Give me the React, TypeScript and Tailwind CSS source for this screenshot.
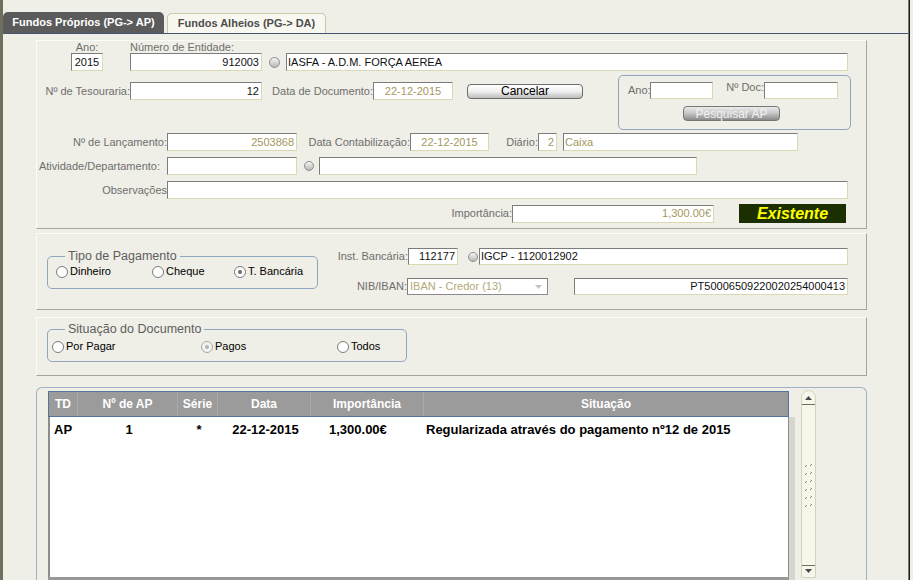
import type { ReactNode } from 'react'

type BoxProps = { className: string; value?: string; align?: 'left' | 'right' | 'center'; tan?: boolean }

function Box({ className, value = '', align = 'left', tan = false }: BoxProps) {
  const alignCls =
    align === 'right' ? 'justify-end pr-[2px]' : align === 'center' ? 'justify-center' : 'justify-start pl-[1px]'
  return (
    <div
      className={`${className} shrink-0 flex items-center bg-white border border-t-[#7c7c7c] border-l-[#7c7c7c] border-r-[#d9d9b2] border-b-[#d9d9b2] text-[11px] leading-none whitespace-nowrap overflow-hidden ${alignCls} ${tan ? 'text-[#a4975f]' : 'text-[#111]'}`}
    >
      {value}
    </div>
  )
}

function Lbl({ className, children }: { className: string; children: ReactNode }) {
  return (
    <div className={`${className} shrink-0 text-right text-[11px] leading-[13px] text-[#6e6e6e] whitespace-nowrap`}>
      {children}
    </div>
  )
}

// little grey round "lookup" button next to the code fields
function Lookup({ className }: { className: string }) {
  return (
    <div
      className={`${className} shrink-0 rounded-full border border-[#8c8c8c] bg-linear-to-b from-[#f6f6f6] to-[#b8b8b8]`}
    />
  )
}

function Radio({ label, checked = false, dim = false, className }: { label: string; checked?: boolean; dim?: boolean; className: string }) {
  return (
    <div className={`${className} shrink-0 flex items-center h-[13px]`}>
      <div
        className={`w-[12px] h-[12px] rounded-full border flex items-center justify-center ${dim ? 'border-[#a8a8a8] bg-[#f3f3f0]' : 'border-[#7a7a7a] bg-white'}`}
      >
        {checked && <div className={`w-[4px] h-[4px] rounded-full ${dim ? 'bg-[#b4b4b4]' : 'bg-[#6a6a6a]'}`} />}
      </div>
      <span className="ml-[2px] text-[11px] leading-none text-black">{label}</span>
    </div>
  )
}

const cols = [
  { t: 'TD', w: 'w-[29px]', v: 'AP', a: 'justify-start pl-[4px]' },
  { t: 'Nº de AP', w: 'w-[100px]', v: '1', a: 'justify-center' },
  { t: 'Série', w: 'w-[40px]', v: '*', a: 'justify-center' },
  { t: 'Data', w: 'w-[93px]', v: '22-12-2015', a: 'justify-center' },
  { t: 'Importância', w: 'w-[113px]', v: '1,300.00€', a: 'justify-start pl-[17px]' },
  { t: 'Situação', w: 'w-[364px]', v: 'Regularizada através do pagamento nº12 de 2015', a: 'justify-start pl-[1px]' },
]

function Scrollbar() {
  return (
    <div className="ml-[6px] mt-[2px] w-[15px] h-[188px] shrink-0 flex flex-col rounded-t-[8px] border border-[#d3d3ba] bg-[#f6f6ea]">
      <div className="h-[14px] shrink-0 flex items-end justify-center pb-[4px] border-b border-[#6f6f5a]">
        <svg width="7" height="4" viewBox="0 0 7 4">
          <path d="M0 4 L3.5 0 L7 4 Z" fill="#4a4a4a" />
        </svg>
      </div>
      <div className="flex-1 flex items-center justify-center">
        <svg width="9" height="44" viewBox="0 0 9 44">
          {[0, 1, 2, 3, 4, 5].map(i => (
            <g key={i} stroke="#8b8b5c" strokeWidth="1">
              <path d={`M1 ${i * 8 + 4} L3 ${i * 8 + 2}`} />
              <path d={`M6 ${i * 8 + 3} L8 ${i * 8 + 1}`} />
            </g>
          ))}
        </svg>
      </div>
      <div className="h-[12px] shrink-0 flex items-start justify-center pt-[3px] border-t border-[#6f6f5a]">
        <svg width="7" height="4" viewBox="0 0 7 4">
          <path d="M0 0 L3.5 4 L7 0 Z" fill="#4a4a4a" />
        </svg>
      </div>
    </div>
  )
}

export default function App() {
  return (
    <div className="w-[913px] h-[580px] overflow-hidden flex bg-[#efeee7] font-['Liberation_Sans',Arial,sans-serif]">
      <div className="w-[3px] shrink-0 bg-[#6f6f5e]" />

      <div className="w-[905px] shrink-0 flex flex-col">
        {/* tabs */}
        <div className="h-[33px] shrink-0 flex items-end">
          <div className="w-[161px] h-[21px] rounded-t-[5px] bg-[#5b5b5b] flex items-center justify-center text-[11px] font-bold text-white">
            Fundos Próprios (PG-&gt; AP)
          </div>
          <div className="ml-[3px] w-[159px] h-[20px] rounded-t-[5px] border border-b-0 border-[#c9c9a5] bg-[#f8f8f1] flex items-center justify-center text-[11px] font-bold text-[#4d4d4d]">
            Fundos Alheios (PG-&gt; DA)
          </div>
        </div>

        {/* frame */}
        <div className="flex-1 flex flex-col border-t border-[#3f5573]">
          {/* document panel */}
          <div className="mt-[6px] ml-[33px] w-[831px] shrink-0 border border-t-[#fbfbf7] border-l-[#fbfbf7] border-r-[#a5a5a0] border-b-[#a5a5a0] pb-[5px]">
            <div className="h-[12px] flex items-center text-[11px] text-[#6e6e6e]">
              <div className="ml-[34px] w-[32px] text-center">Ano:</div>
              <div className="ml-[27px]">Número de Entidade:</div>
            </div>
            <div className="h-[18px] flex items-center">
              <Box className="ml-[34px] w-[32px] h-[18px]" value="2015" align="center" />
              <Box className="ml-[27px] w-[132px] h-[18px]" value="912003" align="right" />
              <Lookup className="ml-[7px] w-[11px] h-[11px]" />
              <Box className="ml-[6px] w-[562px] h-[18px]" value="IASFA - A.D.M. FORÇA AEREA" />
            </div>

            <div className="mt-[4px] flex items-start">
              <div className="mt-[7px] h-[18px] flex items-center">
                <Lbl className="w-[93px]">Nº de Tesouraria:</Lbl>
                <Box className="w-[132px] h-[18px]" value="12" align="right" />
                <Lbl className="w-[111px]">Data de Documento:</Lbl>
                <Box className="w-[80px] h-[18px]" value="22-12-2015" align="center" tan />
                <button className="ml-[14px] w-[116px] h-[15px] rounded-[4px] border border-[#6c6c6c] bg-linear-to-b from-[#ffffff] via-[#efefef] to-[#bdbdbd] text-[12px] leading-none text-black">
                  Cancelar
                </button>
              </div>
              <div className="ml-[35px] w-[233px] h-[55px] shrink-0 rounded-[5px] border border-[#8fa5c0]">
                <div className="mt-[6px] h-[17px] flex items-center">
                  <Lbl className="ml-[9px] w-[22px]">Ano:</Lbl>
                  <Box className="w-[63px] h-[17px]" />
                  <Lbl className="ml-[12px] w-[39px] self-start -mt-[1px]">Nº Doc:</Lbl>
                  <Box className="w-[74px] h-[17px]" />
                </div>
                <button className="mt-[7px] ml-[64px] w-[97px] h-[15px] rounded-[4px] border border-[#777] bg-linear-to-b from-[#ececec] via-[#c4c4c4] to-[#8a8a8a] text-[12px] leading-none text-[#f2f2f2]">
                  Pesquisar AP
                </button>
              </div>
            </div>

            <div className="mt-[3px] h-[18px] flex items-center">
              <Lbl className="w-[130px]">Nº de Lançamento:</Lbl>
              <Box className="w-[130px] h-[18px]" value="2503868" align="right" tan />
              <Lbl className="w-[113px]">Data Contabilização:</Lbl>
              <Box className="w-[79px] h-[18px]" value="22-12-2015" align="center" tan />
              <Lbl className="w-[49px]">Diário:</Lbl>
              <Box className="w-[19px] h-[18px]" value="2" align="right" tan />
              <Box className="ml-[6px] w-[235px] h-[18px]" value="Caixa" tan />
            </div>

            <div className="mt-[6px] h-[18px] flex items-center">
              <Lbl className="w-[123px]">Atividade/Departamento:</Lbl>
              <Box className="ml-[7px] w-[130px] h-[18px]" />
              <Lookup className="ml-[7px] w-[10px] h-[10px]" />
              <Box className="ml-[5px] w-[378px] h-[18px]" />
            </div>

            <div className="mt-[6px] h-[18px] flex items-center">
              <Lbl className="w-[130px]">Observações</Lbl>
              <Box className="w-[681px] h-[18px]" />
            </div>

            <div className="mt-[5px] h-[19px] flex items-center">
              <Lbl className="w-[475px]">Importância:</Lbl>
              <Box className="w-[202px] h-[18px]" value="1,300.00€" align="right" tan />
              <div className="ml-[25px] w-[107px] h-[19px] shrink-0 bg-[#1c2f00] flex items-center justify-center text-[16px] leading-none font-bold italic text-[#ffff00]">
                Existente
              </div>
            </div>
          </div>

          {/* payment panel */}
          <div className="mt-[4px] ml-[33px] w-[831px] h-[77px] shrink-0 flex items-start border border-t-[#fbfbf7] border-l-[#fbfbf7] border-r-[#a5a5a0] border-b-[#a5a5a0]">
            <fieldset className="mt-[15px] ml-[10px] w-[271px] h-[40px] shrink-0 rounded-[5px] border border-[#8fa5c0]">
              <legend className="ml-[17px] px-[3px] text-[12.5px] leading-[14px] text-[#5e5e5e]">Tipo de Pagamento</legend>
              <div className="mt-[2px] flex items-center">
                <Radio className="ml-[8px] w-[96px]" label="Dinheiro" />
                <Radio className="w-[82px]" label="Cheque" />
                <Radio className="" label="T. Bancária" checked />
              </div>
            </fieldset>
            <div className="flex flex-col">
              <div className="mt-[14px] h-[17px] flex items-center">
                <Lbl className="w-[90px]">Inst. Bancária:</Lbl>
                <Box className="w-[50px] h-[17px]" value="112177" align="right" />
                <Lookup className="ml-[10px] w-[10px] h-[10px]" />
                <Box className="ml-[1px] w-[369px] h-[17px]" value="IGCP - 1120012902" />
              </div>
              <div className="mt-[13px] h-[17px] flex items-center">
                <Lbl className="w-[89px]">NIB/IBAN:</Lbl>
                <div className="w-[141px] h-[17px] shrink-0 flex items-center border border-t-[#7c7c7c] border-l-[#7c7c7c] border-r-[#8a8a8a] border-b-[#8a8a8a] bg-white">
                  <span className="flex-1 pl-[2px] text-[11px] leading-none text-[#b3a876]">IBAN - Credor (13)</span>
                  <div className="w-[15px] h-[13px] mr-[1px] flex items-center justify-center">
                    <svg width="7" height="4" viewBox="0 0 7 4">
                      <path d="M0 0 L3.5 4 L7 0 Z" fill="#c4c4c4" />
                    </svg>
                  </div>
                </div>
                <Box className="ml-[26px] w-[274px] h-[17px]" value="PT50006509220020254000413" align="right" />
              </div>
            </div>
          </div>

          {/* document status panel */}
          <div className="mt-[7px] ml-[33px] w-[831px] h-[59px] shrink-0 border border-t-[#fbfbf7] border-l-[#fbfbf7] border-r-[#a5a5a0] border-b-[#a5a5a0]">
            <fieldset className="mt-[4px] ml-[10px] w-[360px] h-[40px] rounded-[5px] border border-[#8fa5c0]">
              <legend className="ml-[17px] px-[3px] text-[12.5px] leading-[14px] text-[#5e5e5e]">Situação do Documento</legend>
              <div className="mt-[4px] flex items-center">
                <Radio className="ml-[4px] w-[149px]" label="Por Pagar" />
                <Radio className="w-[136px]" label="Pagos" checked dim />
                <Radio className="" label="Todos" />
              </div>
            </fieldset>
          </div>

          {/* list panel */}
          <div className="mt-[11px] ml-[33px] w-[831px] h-[200px] shrink-0 rounded-t-[6px] border border-b-0 border-[#9db0c6] flex items-start">
            <div className="ml-[11px] mt-[3px] w-[741px] shrink-0 flex flex-col">
              <div className="h-[26px] flex bg-[#9b9b9b] border border-[#56749c]">
                {cols.map(c => (
                  <div
                    key={c.t}
                    className={`${c.w} shrink-0 flex items-center justify-center border-r border-[#a9a9a9] last:border-r-0 text-[12px] font-bold text-white`}
                  >
                    {c.t}
                  </div>
                ))}
              </div>
              <div className="h-[160px] bg-white border-l-2 border-r border-[#8c8c8c]">
                <div className="h-[26px] flex">
                  {cols.map(c => (
                    <div
                      key={c.t}
                      className={`${c.w} shrink-0 flex items-center ${c.a} text-[13px] font-bold text-black whitespace-nowrap`}
                    >
                      {c.v}
                    </div>
                  ))}
                </div>
              </div>
              <div className="h-[3px] bg-[#999]" />
            </div>
            <div className="mt-[29px] w-[6px] h-[170px] shrink-0 bg-[#d6d6d0]" />
            <Scrollbar />
          </div>
        </div>
      </div>

      <div className="w-[1px] shrink-0 bg-[#7a7a7a]" />
      <div className="w-[1px] shrink-0 bg-[#1a1a1a]" />
    </div>
  )
}
